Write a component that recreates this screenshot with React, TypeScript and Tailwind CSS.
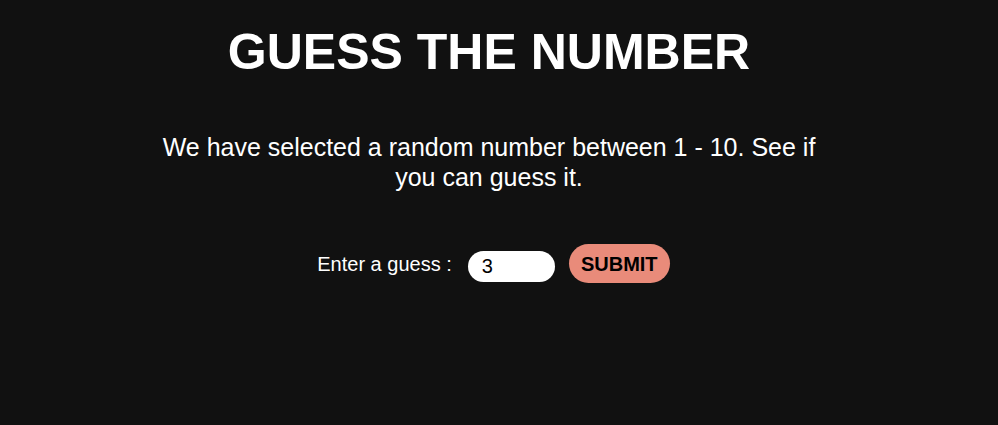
import { useState } from "react";

export default function App() {
  const [guess, setGuess] = useState("3");

  return (
    <main className="min-h-screen bg-[#111111] text-white flex flex-col items-center pr-[20px] font-['Liberation_Sans',Arial,sans-serif]">
      <h1 className="mt-[22px] text-[50px] leading-[60px] font-bold">GUESS THE NUMBER</h1>

      <p className="mt-[50px] w-[670px] text-center text-[25px] leading-[30px]">
        We have selected a random number between 1 - 10. See if you can guess it.
      </p>

      <form
        onSubmit={(e) => e.preventDefault()}
        className="mt-[52px] ml-[9px] flex items-center"
      >
        <label htmlFor="guess" className="text-[20px] mt-[1px]">
          Enter a guess :
        </label>
        <input
          id="guess"
          type="text"
          value={guess}
          onChange={(e) => setGuess(e.target.value)}
          className="ml-4 self-start mt-[7px] w-[87px] h-[31px] rounded-full bg-white text-black text-[20px] px-[14px] outline-none"
        />
        <button
          type="submit"
          className="ml-[14px] w-[101px] h-[39px] rounded-full bg-[#e98b7a] text-black text-[20px] font-bold"
        >
          SUBMIT
        </button>
      </form>
    </main>
  );
}
